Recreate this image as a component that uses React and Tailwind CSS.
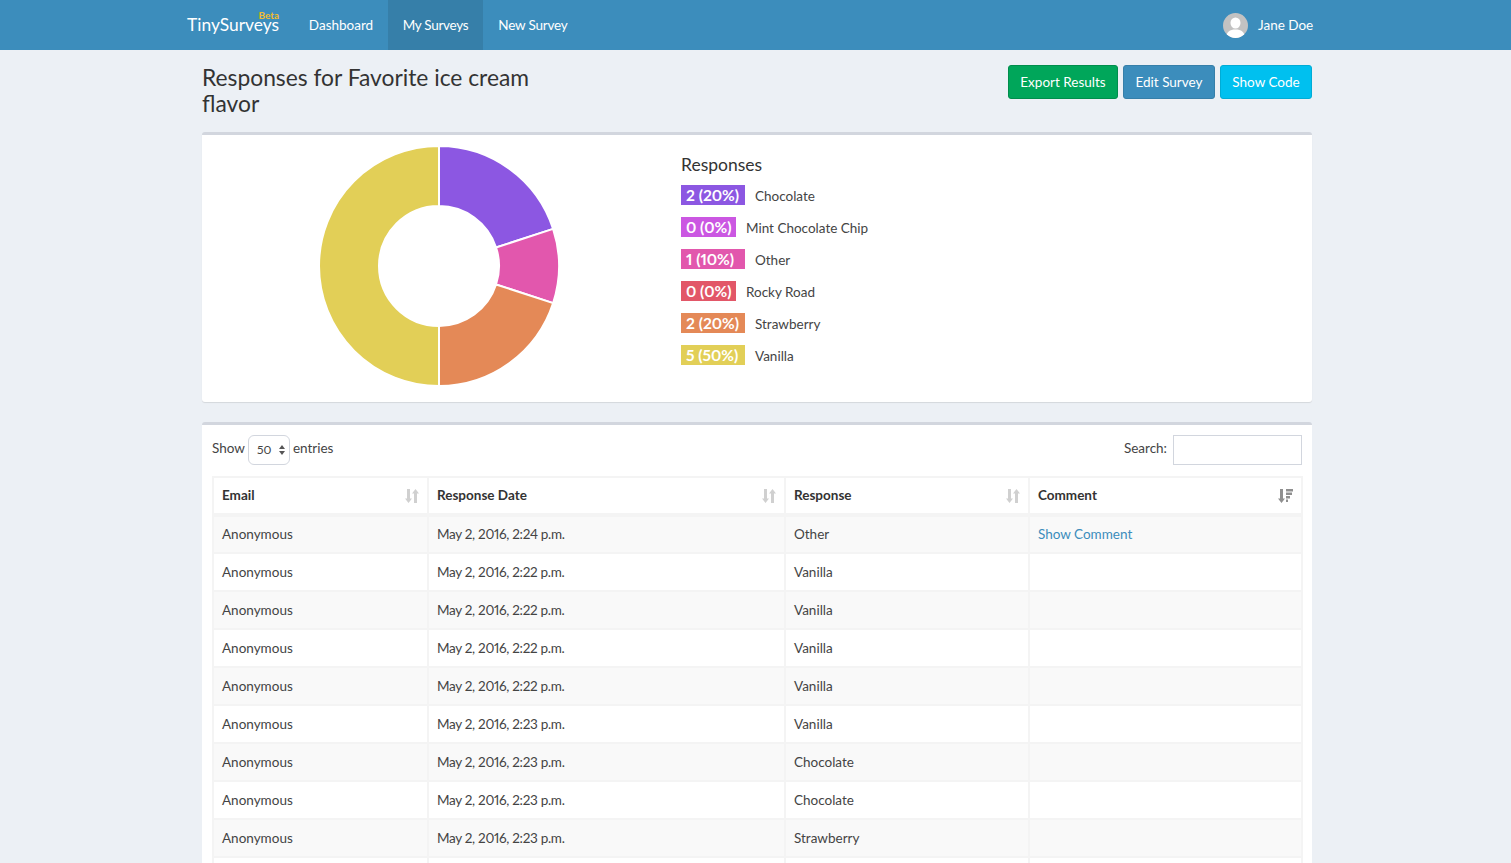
const font = { fontFamily: '"Source Sans Pro", Lato, sans-serif' }

const legend = [
  { value: '2 (20%)', label: 'Chocolate', color: 'bg-[#8c57e2]', width: 'w-[64px]' },
  { value: '0 (0%)', label: 'Mint Chocolate Chip', color: 'bg-[#cb57e2]', width: 'w-[55px]' },
  { value: '1 (10%)', label: 'Other', color: 'bg-[#e257ad]', width: 'w-[64px]' },
  { value: '0 (0%)', label: 'Rocky Road', color: 'bg-[#e25768]', width: 'w-[55px]' },
  { value: '2 (20%)', label: 'Strawberry', color: 'bg-[#e48957]', width: 'w-[64px]' },
  { value: '5 (50%)', label: 'Vanilla', color: 'bg-[#e2cf57]', width: 'w-[64px]' },
]

const rows = [
  ['May 2, 2016, 2:24 p.m.', 'Other', true],
  ['May 2, 2016, 2:22 p.m.', 'Vanilla'],
  ['May 2, 2016, 2:22 p.m.', 'Vanilla'],
  ['May 2, 2016, 2:22 p.m.', 'Vanilla'],
  ['May 2, 2016, 2:22 p.m.', 'Vanilla'],
  ['May 2, 2016, 2:23 p.m.', 'Vanilla'],
  ['May 2, 2016, 2:23 p.m.', 'Chocolate'],
  ['May 2, 2016, 2:23 p.m.', 'Chocolate'],
  ['May 2, 2016, 2:23 p.m.', 'Strawberry'],
  ['May 2, 2016, 2:23 p.m.', 'Strawberry'],
]

function polar(r, deg) {
  const a = ((deg - 90) * Math.PI) / 180
  return [121 + r * Math.cos(a), 121 + r * Math.sin(a)]
}

function slice(from, to) {
  const [x1, y1] = polar(120, from)
  const [x2, y2] = polar(120, to)
  const [x3, y3] = polar(60, to)
  const [x4, y4] = polar(60, from)
  const large = to - from > 180 ? 1 : 0
  return `M${x1} ${y1}A120 120 0 ${large} 1 ${x2} ${y2}L${x3} ${y3}A60 60 0 ${large} 0 ${x4} ${y4}Z`
}

function Donut() {
  const parts = [
    [0, 72, '#8c57e2'],
    [72, 108, '#e257ad'],
    [108, 180, '#e48957'],
    [180, 360, '#e2cf57'],
  ]
  return (
    <svg width="242" height="242" viewBox="0 0 242 242">
      {parts.map(([from, to, color]) => (
        <path key={from} d={slice(from, to)} fill={color} stroke="#fff" strokeWidth="2" />
      ))}
    </svg>
  )
}

function SortBoth() {
  return (
    <svg width="14" height="14" viewBox="0 0 14 14" fill="#d0d0d0">
      <path d="M0 9.500h2V0h3v9.500h2L3.500 14z" />
      <path d="M7 4.500h2V14h3V4.500h2L10.500 0z" />
    </svg>
  )
}

function SortAmount() {
  return (
    <svg width="15" height="14" viewBox="0 0 15 14" fill="#8f8f8f">
      <path d="M0 9.500h2V0h3v9.500h2L3.500 14z" />
      <path d="M8 0h7v2.500H8zM8 3.500h6v2.500H8zM8 7h4v2.500H8zM8 10.500h2V13H8z" />
    </svg>
  )
}

function Avatar() {
  return (
    <svg width="25" height="25" viewBox="0 0 25 25">
      <defs>
        <clipPath id="avatar-clip">
          <circle cx="12.500" cy="12.500" r="12.500" />
        </clipPath>
      </defs>
      <g clipPath="url(#avatar-clip)">
        <rect width="25" height="25" fill="#c2c2c2" />
        <ellipse cx="12.500" cy="10" rx="5" ry="5.500" fill="#fff" />
        <path d="M3 25c0-6 4-8.500 9.500-8.500S22 19 22 25z" fill="#fff" />
      </g>
    </svg>
  )
}

function HeaderCell({ label, width, icon }) {
  return (
    <th className={`${width} h-[38px] border-2 border-b-4 border-[#f4f4f4] px-2 text-left text-[13.5px] font-bold text-[#333]`}>
      <div className="flex items-center justify-between">
        <span>{label}</span>
        {icon}
      </div>
    </th>
  )
}

export default function App() {
  return (
    <div className="h-[863px] overflow-hidden bg-[#ecf0f5] text-[13.5px] text-[#444] proportional-nums" style={font}>
      <nav className="flex h-[50px] items-center bg-[#3c8dbc] pl-[187px] pr-[199px] text-white">
        <a className="relative mr-[15px] w-[92px] whitespace-nowrap text-[17.4px]">
          TinySurveys
          <span className="absolute -top-[2px] right-0 text-[10px] font-bold leading-none text-[#f1bc2c]">Beta</span>
        </a>
        <a className="flex h-full w-[94px] items-center justify-center">Dashboard</a>
        <a className="flex h-full w-[95px] items-center justify-center bg-[#367fa9] tracking-[-0.3px]">My Surveys</a>
        <a className="flex h-full w-[100px] items-center justify-center tracking-[-0.2px]">New Survey</a>
        <div className="ml-auto flex items-center gap-[10px]">
          <Avatar />
          <span className="w-[54px] whitespace-nowrap">Jane Doe</span>
        </div>
      </nav>

      <main className="ml-[202px] w-[1110px]">
        <header className="flex h-[82px] items-start justify-between pt-[14px]">
          <h1 className="w-[360px] text-[22.8px] font-normal leading-[26px] text-[#333]">Responses for Favorite ice cream flavor</h1>
          <div className="mt-[1px] flex gap-[5px]">
            <button className="h-[34px] w-[110px] rounded-[3px] border border-[#008d4c] bg-[#00a65a] text-white">Export Results</button>
            <button className="h-[34px] w-[92px] rounded-[3px] border border-[#367fa9] bg-[#3c8dbc] text-white">Edit Survey</button>
            <button className="h-[34px] w-[92px] rounded-[3px] border border-[#00acd6] bg-[#00c0ef] text-white">Show Code</button>
          </div>
        </header>

        <section className="flex h-[270px] rounded-[3px] border-t-[3px] border-[#d2d6de] bg-white shadow-[0_1px_1px_rgba(0,0,0,0.1)]">
          <div className="w-[479px] pl-[116px] pt-[10px]">
            <Donut />
          </div>
          <div className="pt-[20px]">
            <h3 className="mb-[4px] text-[17.5px] font-normal leading-[20px] text-[#333]">Responses</h3>
            <ul>
              {legend.map((item) => (
                <li key={item.label} className="flex h-[32px] items-center">
                  <span className={`${item.color} ${item.width} h-[20px] px-[5px] text-[15.5px] font-bold leading-[20px] whitespace-nowrap text-white`}>{item.value}</span>
                  <span className="ml-[10px] pt-[2px]">{item.label}</span>
                </li>
              ))}
            </ul>
          </div>
        </section>

        <section className="mt-[20px] rounded-[3px] border-t-[3px] border-[#d2d6de] bg-white px-[10px] pt-[10px]">
          <div className="flex h-[41px] items-start justify-between leading-[26px]">
            <label className="flex h-[30px] items-start gap-[3px]">
              Show
              <span className="flex h-[30px] w-[42px] items-center justify-between rounded-[6px] border border-[#d2d6de] pl-2 pr-[4px] text-[12px]">
                50
                <svg width="6" height="10" viewBox="0 0 6 10" fill="#555">
                  <path d="M3 0l3 4H0zM3 10L0 6h6z" />
                </svg>
              </span>
              entries
            </label>
            <label className="flex h-[30px] items-start gap-[6px]">
              Search:
              <span className="h-[30px] w-[129px] border border-[#d2d6de]" />
            </label>
          </div>
          <table className="w-[1089px] table-fixed border-collapse">
            <thead>
              <tr>
                <HeaderCell label="Email" width="w-[215px]" icon={<SortBoth />} />
                <HeaderCell label="Response Date" width="w-[357px]" icon={<SortBoth />} />
                <HeaderCell label="Response" width="w-[244px]" icon={<SortBoth />} />
                <HeaderCell label="Comment" width="w-[273px]" icon={<SortAmount />} />
              </tr>
            </thead>
            <tbody>
              {rows.map((row, i) => (
                <tr key={i} className={`h-[38px] ${i % 2 === 0 ? 'bg-[#f9f9f9]' : 'bg-white'}`}>
                  <td className="border-2 border-[#f4f4f4] px-2">Anonymous</td>
                  <td className="border-2 border-[#f4f4f4] px-2 tracking-[-0.3px]">{row[0]}</td>
                  <td className="border-2 border-[#f4f4f4] px-2">{row[1]}</td>
                  <td className="border-2 border-[#f4f4f4] px-2 text-[#3c8dbc]">{row[2] ? 'Show Comment' : ''}</td>
                </tr>
              ))}
            </tbody>
          </table>
        </section>
      </main>
    </div>
  )
}
